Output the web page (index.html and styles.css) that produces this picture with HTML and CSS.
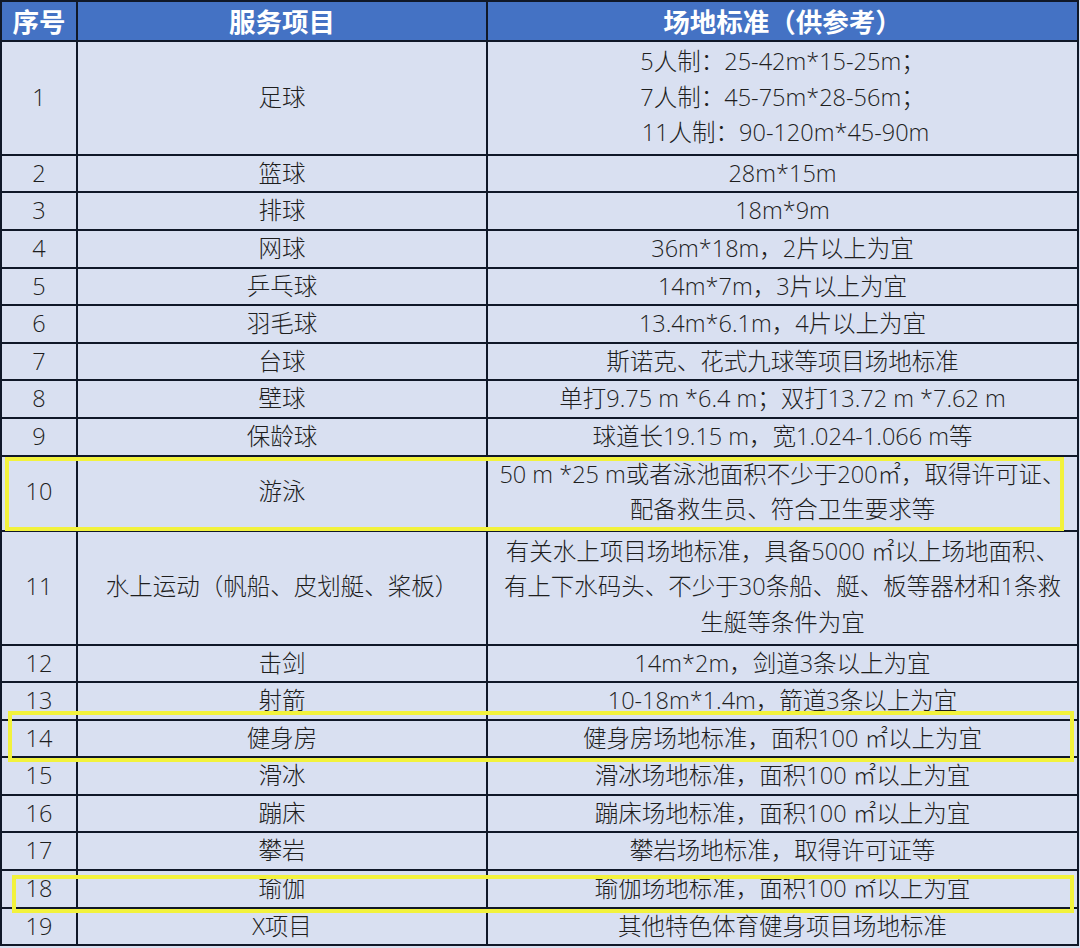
FILE: index.html
```html
<!DOCTYPE html>
<html lang="zh">
<head>
<meta charset="utf-8">
<link rel="stylesheet" href="styles.css">
</head>
<body>
<div class="wrap">
<table class="tbl">
<colgroup><col class="c1"><col class="c2"><col class="c3"></colgroup>
<thead>
<tr><th>序号</th><th>服务项目</th><th>场地标准（供参考）</th></tr>
</thead>
<tbody>
<tr class="m3"><td>1</td><td>足球</td><td>5人制：25-42m*15-25m；<br>7人制：45-75m*28-56m；<br>&nbsp;11人制：90-120m*45-90m</td></tr>
<tr><td>2</td><td>篮球</td><td>28m*15m</td></tr>
<tr><td>3</td><td>排球</td><td>18m*9m</td></tr>
<tr><td>4</td><td>网球</td><td>36m*18m，2片以上为宜</td></tr>
<tr><td>5</td><td>乒乓球</td><td>14m*7m，3片以上为宜</td></tr>
<tr><td>6</td><td>羽毛球</td><td>13.4m*6.1m，4片以上为宜</td></tr>
<tr><td>7</td><td>台球</td><td>斯诺克、花式九球等项目场地标准</td></tr>
<tr><td>8</td><td>壁球</td><td>单打9.75 m *6.4 m；双打13.72 m *7.62 m</td></tr>
<tr><td>9</td><td>保龄球</td><td>球道长19.15 m，宽1.024-1.066 m等</td></tr>
<tr class="m2"><td>10</td><td>游泳</td><td>50 m *25 m或者泳池面积不少于200㎡，取得许可证、<br>配备救生员、符合卫生要求等</td></tr>
<tr class="m3"><td>11</td><td>水上运动（帆船、皮划艇、桨板）</td><td>有关水上项目场地标准，具备5000 ㎡以上场地面积、<br>有上下水码头、不少于30条船、艇、板等器材和1条救<br>生艇等条件为宜</td></tr>
<tr><td>12</td><td>击剑</td><td>14m*2m，剑道3条以上为宜</td></tr>
<tr><td>13</td><td>射箭</td><td>10-18m*1.4m，箭道3条以上为宜</td></tr>
<tr><td>14</td><td>健身房</td><td>健身房场地标准，面积100 ㎡以上为宜</td></tr>
<tr><td>15</td><td>滑冰</td><td>滑冰场地标准，面积100 ㎡以上为宜</td></tr>
<tr><td>16</td><td>蹦床</td><td>蹦床场地标准，面积100 ㎡以上为宜</td></tr>
<tr><td>17</td><td>攀岩</td><td>攀岩场地标准，取得许可证等</td></tr>
<tr><td>18</td><td>瑜伽</td><td>瑜伽场地标准，面积100 ㎡以上为宜</td></tr>
<tr><td>19</td><td>X项目</td><td>其他特色体育健身项目场地标准</td></tr>
</tbody>
</table>
<div class="hl hl-10"></div>
<div class="hl hl-14"></div>
<div class="hl hl-18"></div>
</div>
</body>
</html>
```

FILE: styles.css
```css
html, body {
  margin: 0;
  padding: 0;
  background: #d9e0f0;
}
body {
  width: 1080px;
  height: 948px;
  overflow: hidden;
  font-family: "Open Sans", "Noto Sans CJK SC", sans-serif;
  color: #1e1e1e;
}
.wrap {
  position: relative;
  width: 1080px;
}
.tbl {
  border-collapse: collapse;
  table-layout: fixed;
  width: 1077px;
  background: #d9e0f1;
}
.c1 { width: 76px; }
.c2 { width: 410px; }
.c3 { width: 591px; }
.tbl th,
.tbl td {
  border: 2px solid #101828;
  padding: 0;
  text-align: center;
  vertical-align: middle;
  white-space: nowrap;
}
.tbl th {
  background: #4472c4;
  color: #ffffff;
  font-family: "Noto Sans CJK SC", sans-serif;
  font-size: 26.5px;
  font-weight: 700;
  height: 38px;
  line-height: 38px;
}
.tbl td {
  font-size: 23.5px;
  line-height: 35.6px;
  font-weight: 300;
}
.tbl tr.m3 td { padding: 2px 0 3px; }
.tbl tr.m2 td { padding: 0 0 2px; }
.hl {
  position: absolute;
  border: 4px solid #f2f23c;
  box-sizing: border-box;
}
.hl-10 { left: 5px; top: 457px; width: 1059px; height: 74px; }
.hl-14 { left: 8px; top: 711px; width: 1066px; height: 51px; }
.hl-18 { left: 12px; top: 875px; width: 1062px; height: 38px; }
```
